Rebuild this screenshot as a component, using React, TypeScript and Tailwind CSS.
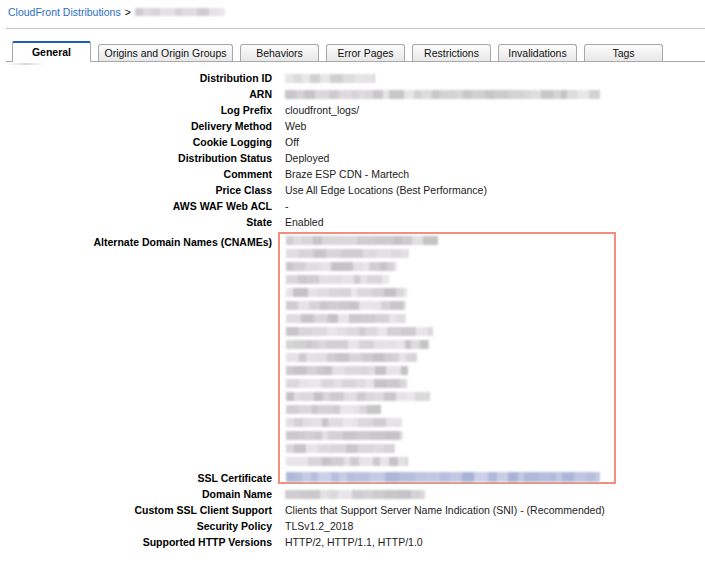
import React from "react";

function rng(seed: number) {
  let s = seed * 9301 + 49297;
  return () => {
    s = (s * 9301 + 49297) % 233280;
    return s / 233280;
  };
}

function Blur({ w, seed, h = 9, blue = false }: { w: number; seed: number; h?: number; blue?: boolean }) {
  const r = rng(seed);
  const segs: { w: number; c: string }[] = [];
  let used = 0;
  while (used < w) {
    const sw = Math.min(w - used, 6 + Math.floor(r() * 10));
    const v = r();
    let c: string;
    if (blue) {
      const l = 74 + Math.floor(v * 12);
      c = `hsl(226, 36%, ${l}%)`;
    } else {
      const g = 196 + Math.floor(v * 38);
      c = `rgb(${g},${g - 2},${g})`;
    }
    segs.push({ w: sw, c });
    used += sw;
  }
  return (
    <div className="flex blur-[0.8px]" style={{ width: w, height: h }}>
      {segs.map((s, i) => (
        <div key={i} style={{ width: s.w, height: h, background: s.c }} />
      ))}
    </div>
  );
}

const top: [string, React.ReactNode][] = [
  ["Distribution ID", <Blur w={90} seed={3} />],
  ["ARN", <Blur w={315} seed={7} />],
  ["Log Prefix", "cloudfront_logs/"],
  ["Delivery Method", "Web"],
  ["Cookie Logging", "Off"],
  ["Distribution Status", "Deployed"],
  ["Comment", "Braze ESP CDN - Martech"],
  ["Price Class", "Use All Edge Locations (Best Performance)"],
  ["AWS WAF Web ACL", "-"],
  ["State", "Enabled"],
];

const bottom: [string, React.ReactNode][] = [
  ["Domain Name", <Blur w={140} seed={11} />],
  ["Custom SSL Client Support", "Clients that Support Server Name Indication (SNI) - (Recommended)"],
  ["Security Policy", "TLSv1.2_2018"],
  ["Supported HTTP Versions", "HTTP/2, HTTP/1.1, HTTP/1.0"],
];

const cnames = [152, 123, 111, 103, 121, 120, 120, 147, 143, 131, 122, 121, 144, 95, 116, 117, 109, 122];

const tabs = [
  { label: "Origins and Origin Groups", w: 135 },
  { label: "Behaviors", w: 79 },
  { label: "Error Pages", w: 79 },
  { label: "Restrictions", w: 79 },
  { label: "Invalidations", w: 79 },
  { label: "Tags", w: 79 },
];

function Rows({ rows }: { rows: [string, React.ReactNode][] }) {
  return (
    <div className="grid grid-cols-[272px_1fr] gap-x-[13px]">
      {rows.map(([k, v]) => (
        <React.Fragment key={k}>
          <div className="h-[16px] leading-[16px] text-right font-bold">{k}</div>
          <div className="h-[16px] leading-[16px] flex items-center text-[#222]">{v}</div>
        </React.Fragment>
      ))}
    </div>
  );
}

export default function App() {
  return (
    <div className="w-[705px] h-[566px] bg-white text-black text-[10.5px] font-['Liberation_Sans',Arial,sans-serif] overflow-hidden">
      <div className="h-[28px] pl-[8px] pt-[5px] flex items-start gap-[4px] text-[10.5px]">
        <span className="text-[#2a6ec6]">CloudFront Distributions</span>
        <span>&gt;</span>
        <div className="pt-[3px]">
          <Blur w={90} seed={21} h={8} />
        </div>
      </div>
      <div className="ml-[6px] border-t border-[#c6c6c6]" />
      <div className="ml-[6px] pt-[11px] pl-[6px] flex items-end gap-[7px] border-b border-[#a8a8a8] h-[33px]">
        <div className="relative w-[79px] h-[21px] mb-[-1px] pt-[1px] bg-white border-t-2 border-x border-t-[#1d5fb8] border-x-[#a8a8a8] rounded-t-[2px] flex items-center justify-center font-bold">
          General
          <div className="absolute left-[-7px] top-[20px] w-[40px] h-[2px] bg-gradient-to-r from-transparent via-[#d8d8d8] to-transparent" />
        </div>
        {tabs.map((t) => (
          <div
            key={t.label}
            style={{ width: t.w }}
            className="h-[17px] pt-[1px] border border-b-0 border-[#a8a8a8] rounded-t-[3px] bg-gradient-to-b from-[#fcfcfc] to-[#e8e8e8] flex items-center justify-center text-[#111]"
          >
            {t.label}
          </div>
        ))}
      </div>
      <div className="pt-[8px]">
        <Rows rows={top} />
        <div className="flex h-[256px]">
          <div className="w-[272px] flex flex-col justify-between pt-[4px] text-right font-bold">
            <div className="h-[16px] leading-[16px]">Alternate Domain Names (CNAMEs)</div>
            <div className="h-[16px] leading-[16px]">SSL Certificate</div>
          </div>
          <div className="ml-[6px] mt-[2px] w-[338px] h-[252px] border-2 border-[#ef8f7c] pl-[6px]">
            <div className="flex flex-col">
              {cnames.map((w, i) => (
                <div key={i} className="h-[13px] flex items-center">
                  <Blur w={w} seed={40 + i * 3} h={9} />
                </div>
              ))}
            </div>
            <div className="mt-[4px]">
              <Blur w={314} seed={99} h={10} blue />
            </div>
          </div>
        </div>
        <Rows rows={bottom} />
      </div>
    </div>
  );
}
